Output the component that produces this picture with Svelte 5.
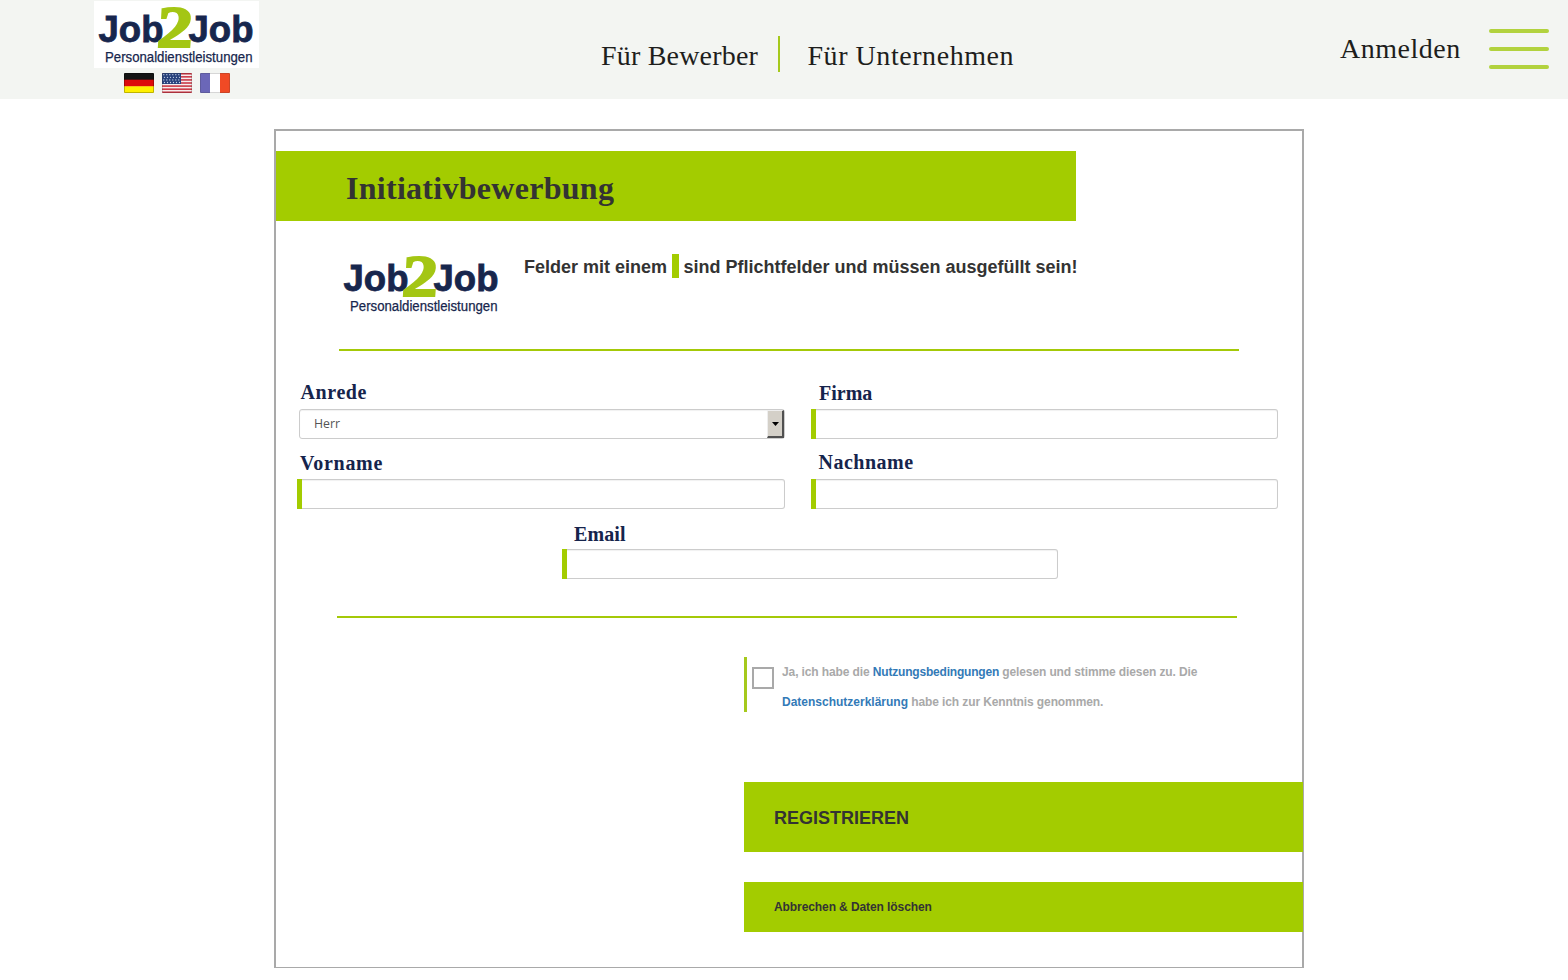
<script>
  const fields = [
    { id: 'anrede', label: 'Anrede', kind: 'select', indent: 1.5, drop: 5, track: 0.6 },
    { id: 'firma', label: 'Firma', kind: 'text', indent: 8, drop: 8, track: 0 },
    { id: 'vorname', label: 'Vorname', kind: 'text', indent: 3, drop: 8, track: 0.7 },
    { id: 'nachname', label: 'Nachname', kind: 'text', indent: 7.5, drop: 6, track: 0.5 },
    { id: 'email', label: 'Email', kind: 'text', indent: 12, drop: 10, track: 0.1 }
  ];
</script>

{#snippet logo()}
  <svg class="logo" width="165" height="67" viewBox="0 0 165 67" role="img">
    <rect width="165" height="67" fill="#fff" />
    <g font-family="'Liberation Sans', Arial, sans-serif" fill="#17264d">
      <g font-size="36.5" font-weight="700" stroke="#17264d" stroke-width=".8">
        <text x="4.5" y="40.6" textLength="65" lengthAdjust="spacingAndGlyphs">Job</text>
        <text x="94.5" y="40.6" textLength="65" lengthAdjust="spacingAndGlyphs">Job</text>
      </g>
      <text x="11" y="61" font-size="14" stroke="#17264d" stroke-width=".25" textLength="147.5" lengthAdjust="spacingAndGlyphs">Personaldienstleistungen</text>
    </g>
    <text transform="translate(66 46) skewX(9)" font-family="'Liberation Serif', 'Times New Roman', serif" font-style="italic" font-weight="700" font-size="59" fill="#a4c614" stroke="#a4c614" stroke-width="2" textLength="36" lengthAdjust="spacingAndGlyphs">2</text>
  </svg>
{/snippet}

<header>
  <div class="brand">
    {@render logo()}
    <div class="flags">
      <svg width="30" height="20" viewBox="0 0 30 20">
        <rect width="30" height="7" fill="#151515" />
        <rect y="6.7" width="30" height="7" fill="#dd0b0b" />
        <rect y="13.3" width="30" height="6.7" fill="#fff000" />
        <rect x=".5" y=".5" width="29" height="19" fill="none" stroke="#000" stroke-opacity=".25" />
      </svg>
      <svg width="30" height="20" viewBox="0 0 30 20">
        <rect width="30" height="20" fill="#f6eeee" />
        {#each [0, 1, 2, 3, 4, 5, 6] as i}
          <rect y={i * 3.08} width="30" height="1.54" fill="#c83240" />
        {/each}
        <rect width="19" height="11" fill="#27417c" />
        {#each [0, 1, 2, 3] as r}
          {#each [0, 1, 2, 3, 4, 5] as c}
            <circle cx={1.8 + c * 3 + (r % 2) * 0.7} cy={1.7 + r * 2.6} r=".65" fill="#c7d3e8" />
          {/each}
        {/each}
        <rect x=".5" y=".5" width="29" height="19" fill="none" stroke="#333" stroke-opacity=".2" />
      </svg>
      <svg width="30" height="20" viewBox="0 0 30 20">
        <rect width="30" height="20" fill="#fff" />
        <rect width="10" height="20" fill="#6b67b8" />
        <rect x="20" width="10" height="20" fill="#f04a25" />
        <rect x=".5" y=".5" width="29" height="19" fill="none" stroke="#333" stroke-opacity=".2" />
      </svg>
    </div>
  </div>
  <nav>
    <a href="#bewerber" class="first">Für Bewerber</a>
    <span class="bar"></span>
    <a href="#unternehmen" class="second">Für Unternehmen</a>
  </nav>
  <div class="account">
    <a href="#anmelden">Anmelden</a>
    <div class="burger"><i></i><i></i><i></i></div>
  </div>
</header>

<main>
  <h1>Initiativbewerbung</h1>
  <div class="intro">
    {@render logo()}
    <p><span>Felder mit einem</span><i></i><span class="rest">sind Pflichtfelder und müssen ausgefüllt sein!</span></p>
  </div>
  <hr />
  <form>
    {#each fields as f}
      <div class="field {f.id}">
        <label for={f.id} style="padding-left:{f.indent}px;padding-top:{f.drop}px;letter-spacing:{f.track}px">{f.label}</label>
        {#if f.kind === 'select'}
          <div class="select" id={f.id}>
            <span>Herr</span>
            <b><svg width="7" height="4" viewBox="0 0 7 4"><path d="M0 0h7L3.5 4z" /></svg></b>
          </div>
        {:else}
          <input id={f.id} type="text" />
        {/if}
      </div>
    {/each}
  </form>
  <hr class="lower" />
  <section>
    <div class="terms">
      <span class="check"></span>
      <p>
        <span class="l1">Ja, ich habe die <a href="#agb">Nutzungsbedingungen</a> gelesen und stimme diesen zu. Die</span>
        <span class="l2"><a href="#datenschutz">Datenschutzerklärung</a> habe ich zur Kenntnis genommen.</span>
      </p>
    </div>
    <button class="submit">REGISTRIEREN</button>
    <button class="cancel">Abbrechen &amp; Daten löschen</button>
  </section>
</main>

<style>
  :global(body) { background: #fff; overflow: hidden; }
  * { box-sizing: border-box; }
  a { text-decoration: none; }
  header {
    display: flex;
    height: 99px;
    background: #f3f5f2;
    font-family: 'Palatino Linotype', 'Liberation Serif', serif;
    font-size: 28px;
    line-height: 40px;
  }
  header a { color: #1e1e1c; white-space: nowrap; }
  .brand { width: 165px; margin: 1px 342px 0 94px; }
  .logo { display: block; flex: none; overflow: visible; }
  .flags { display: flex; gap: 8px; padding: 5px 0 0 30px; }
  .flags svg { border-radius: 1px; }
  nav { display: flex; width: 414px; margin-top: 36px; height: 36px; }
  .first { width: 177px; letter-spacing: 0.2px; }
  .second { padding-left: 27.5px; letter-spacing: 0.55px; }
  .bar { width: 2px; height: 36px; background: #a5c91c; flex: none; }
  .account { display: flex; margin-left: 325px; padding-top: 29px; }
  .account a { width: 149px; letter-spacing: 0.5px; }
  .burger { display: flex; flex-direction: column; gap: 14px; }
  .burger i { width: 60px; height: 4px; border-radius: 2px; background: #b2d23e; }
  main {
    width: 1030px;
    height: 839px;
    margin: 30px 0 0 274px;
    border: 2px solid #a9a9a9;
    border-bottom-width: 1px;
    padding-top: 20px;
    font-family: 'Liberation Sans', Arial, sans-serif;
    color: #333;
  }
  h1 {
    width: 800px;
    height: 70px;
    margin: 0;
    padding: 4px 0 0 70px;
    background: #a3cc00;
    font: bold 32px/66px 'Palatino Linotype', 'Liberation Serif', serif;
    letter-spacing: 0.28px;
  }
  .intro { display: flex; height: 128px; padding: 29px 0 0 63px; }
  .intro p { display: flex; height: 24px; margin: 4px 0 0 20px; font-size: 18px; font-weight: bold; line-height: 27px; white-space: nowrap; }
  .intro p span:first-child { width: 148px; }
  .intro i { width: 7px; height: 24px; background: #a3cc00; }
  .rest { padding-left: 4.5px; }
  hr { width: 900px; height: 2px; border: 0; margin: 0 0 0 63px; background: #a4c908; }
  hr.lower { margin-left: 61px; }
  form {
    display: grid;
    grid-template-columns: 488px 467px;
    column-gap: 26px;
    grid-auto-rows: 70px;
    height: 265px;
    padding: 18px 0 0 21px;
  }
  .field { display: flex; flex-direction: column; }
  .anrede { margin-left: 2px; }
  .email { grid-column: 1 / -1; width: 496px; margin-left: 265px; }
  label { display: flex; align-items: center; height: 40px; font: bold 20px/40px 'Palatino Linotype', 'Liberation Serif', serif; color: #16244c; }
  input, .select {
    width: 100%;
    height: 30px;
    border: 1px solid #ccc;
    border-radius: 3px;
    background: #fff;
    margin: 0;
    box-shadow: inset 0 1px 1px rgba(0, 0, 0, 0.06);
  }
  input {
    border-left: 0;
    border-radius: 0 3px 3px 0;
    width: calc(100% - 5px);
    margin-left: 5px;
    box-shadow: -5px 0 0 #a3cc00, inset 0 1px 1px rgba(0, 0, 0, 0.06);
  }
  .select { display: flex; justify-content: space-between; padding-left: 14px; font: 12.3px/28px 'Open Sans', sans-serif; color: #555; }
  .select b { display: flex; align-items: center; justify-content: center; width: 17px; height: 28px; background: #d4d0c8; border: 1px solid #eee; border-right: 2px solid #505050; border-bottom: 2px solid #505050; }
  section { width: 560px; margin: 39px 0 0 468px; }
  .terms { display: flex; height: 55px; border-left: 3px solid #a5c91c; padding-left: 5px; }
  .check { width: 22px; height: 22px; margin-top: 10px; border: 2px solid #a9a9a9; flex: none; }
  .terms p { margin: 0 0 0 8px; font-size: 12px; font-weight: bold; line-height: 30px; color: #a9a9a9; }
  .terms p span { display: block; white-space: nowrap; }
  .terms a { color: #337ab7; }
  .l1 { letter-spacing: -0.11px; }
  .l1 a { letter-spacing: -0.2px; }
  .l2 { letter-spacing: -0.11px; }
  .l2 a { letter-spacing: 0; }
  button { display: block; width: 559px; border: 0; background: #a3cc00; color: #333; padding: 0 0 0 30px; text-align: left; font-family: inherit; font-weight: bold; }
  .submit { height: 70px; margin-top: 70px; padding-top: 2px; font-size: 18px; }
  .cancel { height: 50px; margin-top: 30px; font-size: 12px; letter-spacing: -0.09px; }
</style>
